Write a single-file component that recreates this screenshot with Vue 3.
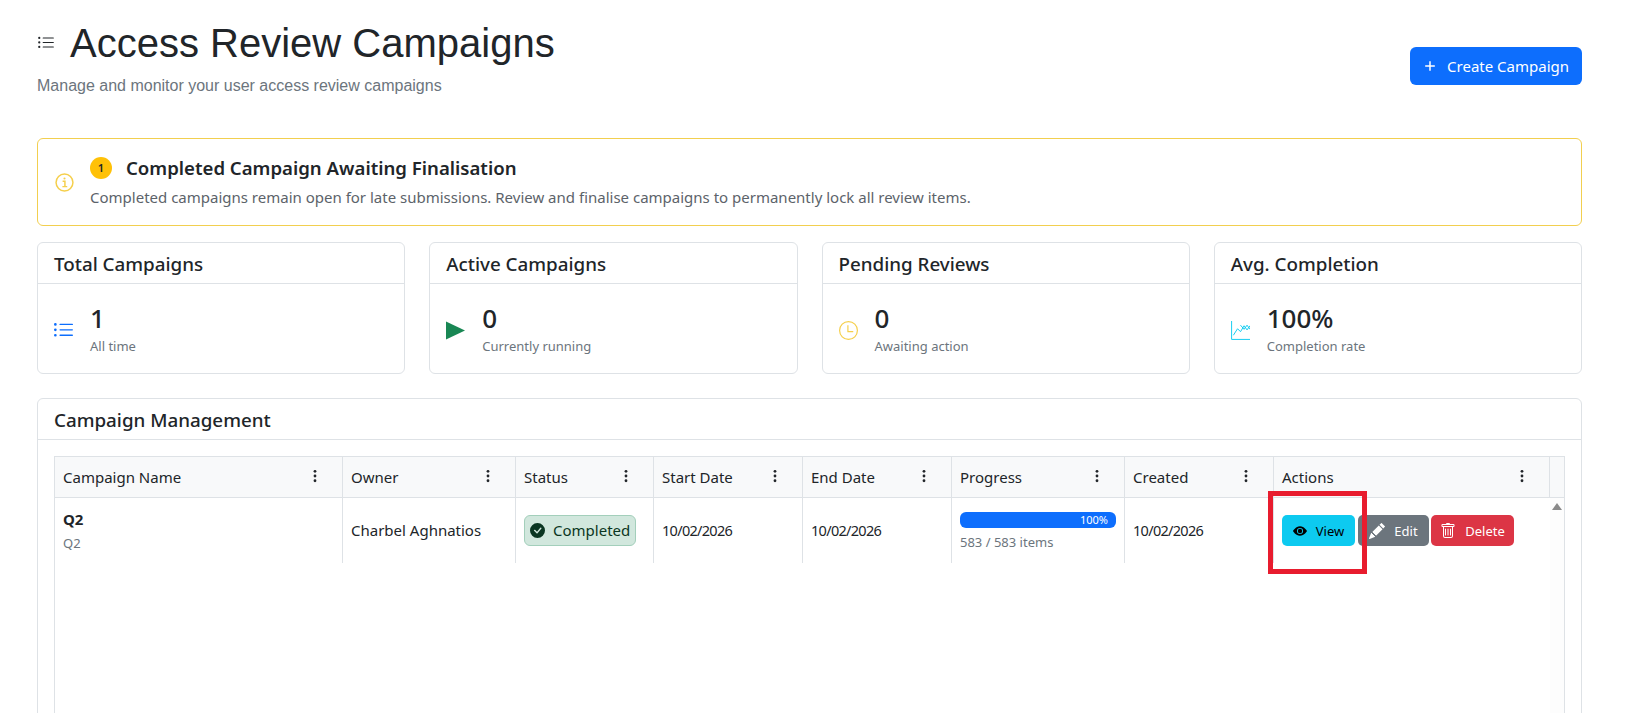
<template>
  <div class="page">
    <header class="page-head">
      <div>
        <h1 class="title">
          <svg class="title-icon" viewBox="0 0 16 16" fill="currentColor"><path :d="icons.list" /></svg>
          Access Review Campaigns
        </h1>
        <p class="subtitle">Manage and monitor your user access review campaigns</p>
      </div>
      <button class="btn-create" type="button">
        <svg viewBox="0 0 16 16" fill="none" stroke="currentColor" stroke-width="1.7"><path d="M8 2.5v11M2.5 8h11" /></svg>
        Create Campaign
      </button>
    </header>

    <section class="notice">
      <svg class="notice-icon" viewBox="0 0 18 18" fill="none" stroke="currentColor">
        <circle cx="9" cy="9" r="8" stroke-width="1.4" />
        <path d="M7.2 7.9H9.4V12.6M7 12.9h4.6" stroke-width="1.4" />
        <circle cx="9" cy="5.2" r="1" fill="currentColor" stroke="none" />
      </svg>
      <div>
        <div class="notice-head">
          <span class="notice-badge">1</span>
          <strong>Completed Campaign Awaiting Finalisation</strong>
        </div>
        <p class="notice-text">Completed campaigns remain open for late submissions. Review and finalise campaigns to permanently lock all review items.</p>
      </div>
    </section>

    <section class="stats">
      <article v-for="s in stats" :key="s.title" class="card">
        <div class="card-head">{{ s.title }}</div>
        <div class="stat-body">
          <svg v-if="s.kind === 'list'" class="stat-icon primary" viewBox="1 2 14 12" fill="currentColor"><path :d="icons.list" /></svg>
          <svg v-else-if="s.kind === 'play'" class="stat-icon success" viewBox="0 0 16 16" fill="currentColor"><path d="M0 0.4 16 8 0 15.6z" /></svg>
          <svg v-else-if="s.kind === 'clock'" class="stat-icon warning" viewBox="0 0 16 16" fill="none" stroke="currentColor" stroke-width="1"><circle cx="8" cy="8" r="7.5" /><path d="M7.5 3.5V9H12" /></svg>
          <svg v-else class="stat-icon info" viewBox="0 0 16 16" fill="none" stroke="currentColor" stroke-width="0.8"><path d="M0.5 0V15.5H16M2 12 5.5 6.5 8 9 11 4l2.5 3.5L16 4M8 3.5 11 7l2.5-3.5L16 7" /></svg>
          <div class="stat-text">
            <div class="stat-value">{{ s.value }}</div>
            <div class="stat-sub">{{ s.sub }}</div>
          </div>
        </div>
      </article>
    </section>

    <section class="card panel">
      <div class="card-head">Campaign Management</div>
      <div class="panel-body">
        <div class="grid">
          <div class="grid-row grid-header">
            <div v-for="c in columns" :key="c" class="cell head-cell">
              <span>{{ c }}</span>
              <svg class="kebab" viewBox="0 0 4 16" fill="currentColor"><circle cx="2" cy="2.6" r="1.6" /><circle cx="2" cy="8" r="1.6" /><circle cx="2" cy="13.4" r="1.6" /></svg>
            </div>
            <div class="cell scroll-head"></div>
          </div>
          <div class="grid-body">
            <div class="grid-row data-row">
              <div class="cell">
                <div>
                  <div class="name">Q2</div>
                  <div class="muted">Q2</div>
                </div>
              </div>
              <div class="cell lift">Charbel Aghnatios</div>
              <div class="cell">
                <span class="status">
                  <svg viewBox="0 0 16 16" fill="currentColor"><path :d="icons.check" /></svg>
                  Completed
                </span>
              </div>
              <div class="cell lift date">10/02/2026</div>
              <div class="cell lift date">10/02/2026</div>
              <div class="cell">
                <div class="progress-wrap">
                  <div class="progress"><div class="progress-bar" :style="{ width: progress + '%' }">{{ progress }}%</div></div>
                  <div class="muted">583 / 583 items</div>
                </div>
              </div>
              <div class="cell lift date">10/02/2026</div>
              <div class="cell actions">
                <button class="btn btn-view" type="button">
                  <svg viewBox="0 0 16 16" fill="currentColor"><path :d="icons.eye" /></svg>View
                </button>
                <button class="btn btn-edit" type="button">
                  <svg class="large" viewBox="0 0 16 16" fill="currentColor"><path :d="icons.pencil" /></svg>Edit
                </button>
                <button class="btn btn-delete" type="button">
                  <svg class="large" viewBox="0 0 16 16" fill="currentColor"><path :d="icons.trash" /></svg>Delete
                </button>
              </div>
            </div>
            <div class="scroll-track"><span class="scroll-arrow"></span></div>
          </div>
        </div>
      </div>
    </section>

    <div class="highlight" aria-hidden="true"></div>
  </div>
</template>

<script setup>
const icons = {
  list: 'M5 11.5a.5.5 0 0 1 .5-.5h9a.5.5 0 0 1 0 1h-9a.5.5 0 0 1-.5-.5m0-4a.5.5 0 0 1 .5-.5h9a.5.5 0 0 1 0 1h-9a.5.5 0 0 1-.5-.5m0-4a.5.5 0 0 1 .5-.5h9a.5.5 0 0 1 0 1h-9a.5.5 0 0 1-.5-.5m-3 1a1 1 0 1 0 0-2 1 1 0 0 0 0 2m0 4a1 1 0 1 0 0-2 1 1 0 0 0 0 2m0 4a1 1 0 1 0 0-2 1 1 0 0 0 0 2',
  check: 'M16 8A8 8 0 1 1 0 8a8 8 0 0 1 16 0m-3.97-3.03a.75.75 0 0 0-1.08.022L7.477 9.417 5.384 7.323a.75.75 0 0 0-1.06 1.06L6.97 11.03a.75.75 0 0 0 1.079-.02l3.992-4.99a.75.75 0 0 0-.01-1.05z',
  eye: 'M10.5 8a2.5 2.5 0 1 1-5 0 2.5 2.5 0 0 1 5 0M0 8s3-5.5 8-5.5S16 8 16 8s-3 5.5-8 5.5S0 8 0 8m8 3.5a3.5 3.5 0 1 0 0-7 3.5 3.5 0 0 0 0 7',
  pencil: 'M12.854.146a.5.5 0 0 0-.707 0L10.5 1.793 14.207 5.5l1.647-1.646a.5.5 0 0 0 0-.708zm.646 6.061L9.793 2.5 3.293 9H3.5a.5.5 0 0 1 .5.5v.5h.5a.5.5 0 0 1 .5.5v.5h.5a.5.5 0 0 1 .5.5v.5h.5a.5.5 0 0 1 .5.5v.207zm-7.468 7.468A.5.5 0 0 1 6 13.5V13h-.5a.5.5 0 0 1-.5-.5V12h-.5a.5.5 0 0 1-.5-.5V11h-.5a.5.5 0 0 1-.5-.5V10h-.5a.5.5 0 0 1-.175-.032l-.179.178a.5.5 0 0 0-.11.168l-2 5a.5.5 0 0 0 .65.65l5-2a.5.5 0 0 0 .168-.11z',
  trash: 'M5.5 5.5A.5.5 0 0 1 6 6v6a.5.5 0 0 1-1 0V6a.5.5 0 0 1 .5-.5m2.5 0a.5.5 0 0 1 .5.5v6a.5.5 0 0 1-1 0V6a.5.5 0 0 1 .5-.5m3 .5a.5.5 0 0 0-1 0v6a.5.5 0 0 0 1 0zM14.5 3a1 1 0 0 1-1 1H13v9a2 2 0 0 1-2 2H5a2 2 0 0 1-2-2V4h-.5a1 1 0 0 1-1-1V2a1 1 0 0 1 1-1H6a1 1 0 0 1 1-1h2a1 1 0 0 1 1 1h3.5a1 1 0 0 1 1 1zM4.118 4 4 4.059V13a1 1 0 0 0 1 1h6a1 1 0 0 0 1-1V4.059L11.882 4zM2.5 3h11V2h-11z',
}

const stats = [
  { title: 'Total Campaigns', value: '1', sub: 'All time', kind: 'list' },
  { title: 'Active Campaigns', value: '0', sub: 'Currently running', kind: 'play' },
  { title: 'Pending Reviews', value: '0', sub: 'Awaiting action', kind: 'clock' },
  { title: 'Avg. Completion', value: '100%', sub: 'Completion rate', kind: 'chart' },
]

const columns = ['Campaign Name', 'Owner', 'Status', 'Start Date', 'End Date', 'Progress', 'Created', 'Actions']
const progress = 100
</script>

<style>
html, body {
  margin: 0;
  height: 100%;
  overflow: hidden;
  background: #fff;
}
</style>

<style scoped>
.page {
  position: relative;
  box-sizing: border-box;
  height: 713px;
  overflow: hidden;
  padding: 19px 47px 0 37px;
  color: #212529;
  font-family: "Noto Sans", "Liberation Sans", sans-serif;
  font-size: 15px;
}

.page-head {
  display: flex;
  align-items: center;
  justify-content: space-between;
  padding-bottom: 26px;
}

.title {
  display: flex;
  align-items: center;
  gap: 15px;
  margin: 0;
  font-family: "Liberation Sans", Arial, sans-serif;
  font-size: 40px;
  font-weight: 400;
  line-height: 48px;
}

.title-icon {
  width: 18px;
  height: 18px;
}

.subtitle {
  margin: 7px 0 14px;
  font-family: "Liberation Sans", Arial, sans-serif;
  font-size: 16px;
  line-height: 24px;
  color: #6c757d;
}

.btn-create {
  display: flex;
  align-items: center;
  gap: 10px;
  height: 38px;
  padding: 0 13px;
  border: none;
  border-radius: 6px;
  background: #0d6efd;
  color: #fff;
  font-family: inherit;
  font-size: 15px;
}

.btn-create svg {
  width: 14px;
  height: 14px;
}

.notice {
  display: flex;
  align-items: center;
  gap: 16px;
  box-sizing: border-box;
  height: 88px;
  padding: 0 17px;
  border: 1px solid #f2cf4f;
  border-radius: 6px;
  margin-bottom: 16px;
}

.notice-icon {
  width: 19px;
  height: 19px;
  color: #f5cf4c;
}

.notice-head {
  display: flex;
  align-items: center;
  gap: 14px;
  font-size: 18.6px;
  line-height: 24px;
}

.notice-head strong {
  font-weight: 600;
}

.notice-badge {
  display: flex;
  align-items: center;
  justify-content: center;
  width: 22px;
  height: 22px;
  border-radius: 50%;
  background: #ffc107;
  font-size: 11px;
  font-weight: 600;
}

.notice-text {
  margin: 6px 0 0;
  font-size: 15px;
  line-height: 22px;
  color: #5c636a;
}

.stats {
  display: grid;
  grid-template-columns: repeat(4, 1fr);
  gap: 24px;
  margin-bottom: 24px;
}

.card {
  box-sizing: border-box;
  border: 1px solid #dee2e6;
  border-radius: 6px;
  background: #fff;
}

.card-head {
  box-sizing: border-box;
  height: 41px;
  padding: 0 16px;
  border-bottom: 1px solid #dee2e6;
  font-size: 18.8px;
  font-weight: 500;
  line-height: 42px;
}

.stat-body {
  display: flex;
  align-items: center;
  gap: 17px;
  height: 89px;
  padding: 0 16px;
}

.stat-icon {
  flex: none;
  width: 19px;
  height: 19px;
  margin-top: 4px;
}

.primary { color: #0d6efd; }
.success { color: #198754; }
.warning { color: #f5cf4c; }
.info { color: #0dcaf0; }

.stat-text {
  margin-top: -2px;
}

.stat-value {
  font-size: 26px;
  font-weight: 500;
  line-height: 36px;
}

.stat-sub {
  margin-top: 1px;
  font-size: 13px;
  line-height: 18px;
  color: #6c757d;
}

.panel {
  height: 500px;
}

.panel-body {
  padding: 16px;
  height: 100%;
  box-sizing: border-box;
}

.grid {
  height: 100%;
  border: 1px solid #dee2e6;
  border-bottom: none;
  --cols: 288px 173px 138px 149px 149px 173px 149px 276px;
}

.grid-row {
  display: grid;
  grid-template-columns: var(--cols);
}

.grid-header {
  grid-template-columns: var(--cols) 1fr;
  height: 40px;
  background: #f8f9fa;
  border-bottom: 1px solid #dee2e6;
}

.cell {
  display: flex;
  align-items: center;
  box-sizing: border-box;
  min-width: 0;
  padding: 0 8px;
  border-right: 1px solid #dee2e6;
  white-space: nowrap;
}

.lift {
  padding-bottom: 2px;
}

.head-cell {
  justify-content: space-between;
  padding-right: 25px;
}

.actions {
  border-right: none;
}

.scroll-head {
  border-right: none;
}

.kebab {
  width: 4px;
  height: 14px;
  margin-top: -2px;
}

.grid-body {
  display: flex;
  justify-content: space-between;
  height: 100%;
}

.data-row {
  height: 65px;
}

.date {
  font-size: 14.5px;
  letter-spacing: -0.7px;
}

.name {
  font-weight: 700;
  line-height: 20px;
}

.muted {
  font-size: 13px;
  line-height: 18px;
  color: #6c757d;
}

.name + .muted {
  margin-top: 5px;
}

.status {
  display: inline-flex;
  align-items: center;
  gap: 8px;
  box-sizing: border-box;
  width: 112px;
  height: 31px;
  padding: 0 5px 1px;
  border: 1px solid #a3cfbb;
  border-radius: 6px;
  background: #d1e7dd;
  color: #0a3622;
}

.status svg {
  width: 15px;
  height: 15px;
  flex: none;
}

.progress-wrap {
  width: calc(100% + 1px);
  margin-top: 1px;
}

.progress {
  height: 16px;
  border-radius: 6px;
  overflow: hidden;
  background: #e9ecef;
  margin-bottom: 5px;
}

.progress-bar {
  height: 100%;
  padding-right: 8px;
  box-sizing: border-box;
  background: #0d6efd;
  color: #fff;
  font-size: 11px;
  line-height: 16px;
  text-align: right;
}

.btn {
  display: inline-flex;
  align-items: center;
  justify-content: center;
  gap: 9px;
  height: 31px;
  padding: 0;
  border: none;
  border-radius: 5px;
  font-family: inherit;
  font-size: 13px;
}

.btn svg {
  width: 14px;
  height: 14px;
}

.btn svg.large {
  width: 16px;
  height: 16px;
}

.btn-view {
  width: 73px;
  background: #0dcaf0;
  color: #000;
}

.btn-edit {
  width: 71px;
  margin-left: 3px;
  background: #6c757d;
  color: #fff;
}

.btn-delete {
  width: 83px;
  margin-left: 2px;
  background: #dc3545;
  color: #fff;
}

.scroll-track {
  box-sizing: border-box;
  width: 16px;
  padding-top: 5px;
  background: #fdfdfd;
  display: flex;
  justify-content: center;
}

.scroll-arrow {
  width: 0;
  height: 0;
  border-left: 5px solid transparent;
  border-right: 5px solid transparent;
  border-bottom: 7px solid #8a8a8a;
}

.highlight {
  position: absolute;
  left: 1268px;
  top: 491px;
  box-sizing: border-box;
  width: 99px;
  height: 83px;
  border: 5px solid #e81c2e;
}
</style>
